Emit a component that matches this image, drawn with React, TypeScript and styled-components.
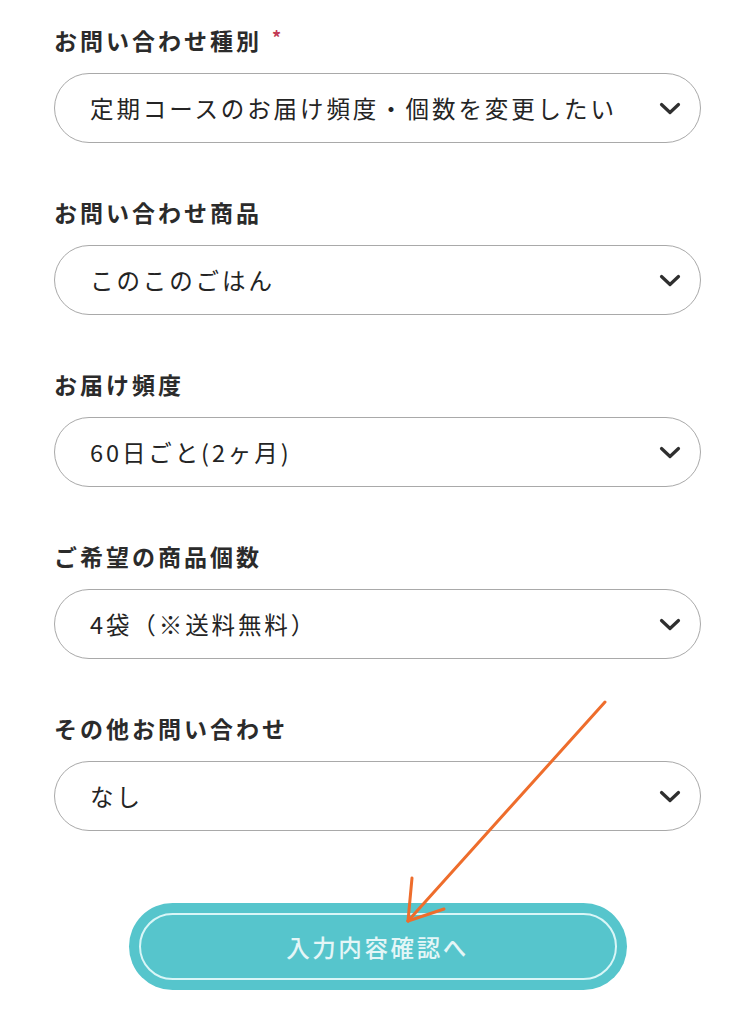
import React from "react";
import styled, { createGlobalStyle } from "styled-components";

const Global = createGlobalStyle`
  html, body { margin: 0; padding: 0; background: #ffffff; }
  body { font-family: "Noto Sans CJK JP", "Noto Sans", sans-serif; color: #2b2b2b; }
`;

const Page = styled.div`
  position: relative;
  width: 747px;
  min-height: 1024px;
  box-sizing: border-box;
  padding: 23px 46px 0 54px;
`;

const Form = styled.div`
  display: flex;
  flex-direction: column;
  width: 647px;
`;

const Field = styled.div`
  display: flex;
  flex-direction: column;
  gap: 16px;
  margin-bottom: 52px;
`;

const Label = styled.div`
  height: 34px;
  line-height: 34px;
  font-size: 23px;
  font-weight: 700;
  letter-spacing: 3px;
  color: #2b2b2b;
  display: flex;
  align-items: center;
`;

const Required = styled.span`
  color: #c23a55;
  font-size: 18px;
  margin-left: 10px;
  position: relative;
  top: -3px;
`;

const SelectBox = styled.div`
  box-sizing: border-box;
  height: 70px;
  border: 1.5px solid #a9a9a9;
  border-radius: 35px;
  background: #fff;
  display: flex;
  align-items: center;
  justify-content: space-between;
  padding: 0 18px 0 35px;
`;

const SelectText = styled.span`
  font-size: 23.5px;
  font-weight: 400;
  letter-spacing: 2.9px;
  color: #242424;
`;

const Chevron = styled.svg`
  width: 24px;
  height: 15px;
  flex: none;
`;

const ButtonWrap = styled.div`
  display: flex;
  justify-content: center;
  margin-top: 20px;
`;

const Button = styled.button`
  box-sizing: border-box;
  width: 498px;
  height: 87px;
  border: none;
  border-radius: 44px;
  background: #56c5cc;
  padding: 10px;
  cursor: pointer;
  display: flex;
`;

const ButtonInner = styled.span`
  flex: 1;
  border: 2px solid #d9f6f7;
  border-radius: 34px;
  display: flex;
  align-items: center;
  justify-content: center;
  font-family: "Noto Sans CJK JP", "Noto Sans", sans-serif;
  font-size: 23.5px;
  font-weight: 500;
  letter-spacing: 2.6px;
  color: #e4f6f7;
`;

const Overlay = styled.svg`
  position: absolute;
  left: 0;
  top: 0;
  width: 747px;
  height: 1024px;
  pointer-events: none;
`;

const fields: { label: string; value: string; required?: boolean }[] = [
  { label: "お問い合わせ種別", value: "定期コースのお届け頻度・個数を変更したい", required: true },
  { label: "お問い合わせ商品", value: "このこのごはん" },
  { label: "お届け頻度", value: "60日ごと(2ヶ月)" },
  { label: "ご希望の商品個数", value: "4袋（※送料無料）" },
  { label: "その他お問い合わせ", value: "なし" },
];

export default function App() {
  return (
    <>
      <Global />
      <Page>
        <Form>
          {fields.map((f) => (
            <Field key={f.label}>
              <Label>
                {f.label}
                {f.required && <Required>*</Required>}
              </Label>
              <SelectBox>
                <SelectText>{f.value}</SelectText>
                <Chevron viewBox="0 0 24 15">
                  <polyline
                    points="3.5,3.5 12,11.5 20.5,3.5"
                    fill="none"
                    stroke="#2f2f2f"
                    strokeWidth="3.2"
                    strokeLinecap="round"
                    strokeLinejoin="round"
                  />
                </Chevron>
              </SelectBox>
            </Field>
          ))}
          <ButtonWrap>
            <Button type="button">
              <ButtonInner>入力内容確認へ</ButtonInner>
            </Button>
          </ButtonWrap>
        </Form>
        <Overlay viewBox="0 0 747 1024">
          <g stroke="#ee6d2c" strokeWidth="3" strokeLinecap="round" fill="none">
            <line x1="605" y1="702" x2="408" y2="921" />
            <line x1="408" y1="921" x2="412" y2="878" />
            <line x1="408" y1="921" x2="444" y2="909" />
          </g>
        </Overlay>
      </Page>
    </>
  );
}
